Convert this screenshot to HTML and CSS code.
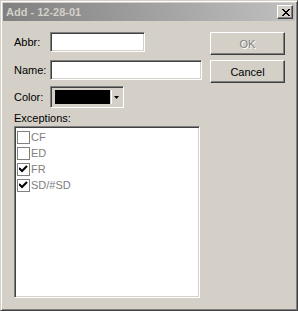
FILE: index.html
```html
<!DOCTYPE html>
<html lang="en">
<head>
    <meta charset="UTF-8">
    <title>Add - 12-28-01</title>
    <link rel="stylesheet" href="styles.css">
</head>
<body>
    <div class="window">
        <!-- Title bar -->
        <div class="titlebar">
            <span class="title">Add - 12-28-01</span>
            <button class="close-btn">
                <svg width="8" height="7" viewBox="0 0 8 7">
                    <path d="M0 0h2v1h-2zM6 0h2v1h-2zM1 1h2v1h-2zM5 1h2v1h-2zM2 2h4v1h-4zM3 3h2v1h-2zM2 4h4v1h-4zM1 5h2v1h-2zM5 5h2v1h-2zM0 6h2v1h-2zM6 6h2v1h-2z" fill="#000"/>
                </svg>
            </button>
        </div>

        <div class="content">
            <div class="form">
                <div class="row row-abbr">
                    <label class="label">Abbr:</label>
                    <div class="field field-abbr"></div>
                </div>
                <div class="row row-name">
                    <label class="label">Name:</label>
                    <div class="field field-name"></div>
                </div>
                <div class="row row-color">
                    <label class="label">Color:</label>
                    <div class="combo">
                        <div class="swatch"></div>
                        <div class="combo-arrow">
                            <svg width="5" height="3" viewBox="0 0 5 3"><path d="M0 0h5L2.5 3z" fill="#000"/></svg>
                        </div>
                    </div>
                </div>

                <div class="list-label">Exceptions:</div>
                <div class="list">
                    <div class="item"><span class="check"></span>CF</div>
                    <div class="item"><span class="check"></span>ED</div>
                    <div class="item"><span class="check checked"><svg width="9" height="8" viewBox="0 0 9 8"><path d="M0 3l2 2 1 1L8 1" stroke="#000" stroke-width="2" fill="none"/></svg></span>FR</div>
                    <div class="item"><span class="check checked"><svg width="9" height="8" viewBox="0 0 9 8"><path d="M0 3l2 2 1 1L8 1" stroke="#000" stroke-width="2" fill="none"/></svg></span>SD/#SD</div>
                </div>
            </div>

            <div class="buttons">
                <button class="btn btn-disabled">OK</button>
                <button class="btn">Cancel</button>
            </div>
        </div>
    </div>
</body>
</html>
```

FILE: styles.css
```css
body, html {
    margin: 0;
    padding: 0;
    background: #d4d0c8;
    font-family: 'Liberation Sans', Arial, sans-serif;
    font-size: 11px;
}

.window {
    box-sizing: border-box;
    width: 298px;
    height: 311px;
    padding: 2px;
    background: #d4d0c8;
    border: 1px solid;
    border-color: #d4d0c8 #404040 #404040 #d4d0c8;
    box-shadow: inset 1px 1px #fff, inset -1px -1px #808080;
}

.titlebar {
    height: 18px;
    display: flex;
    align-items: center;
    justify-content: space-between;
    padding: 0 2px 0 3px;
    background: linear-gradient(to right, #808080, #c0c0c0);
}

.title {
    color: #d4d0c8;
    font-weight: bold;
    font-size: 11px;
}

.close-btn {
    box-sizing: border-box;
    width: 16px;
    height: 14px;
    padding: 0 0 0 1px;
    display: flex;
    align-items: center;
    justify-content: center;
    background: #d4d0c8;
    border: 1px solid;
    border-color: #fff #404040 #404040 #fff;
    box-shadow: inset -1px -1px #808080;
}

.content {
    display: flex;
    gap: 8px;
    padding: 11px 0 0 11px;
}

.form {
    width: 188px;
}

.row {
    display: flex;
    align-items: center;
}

.label {
    width: 36px;
    color: #000;
}

.row-name {
    margin-top: 8px;
}

.row-color {
    margin-top: 6px;
}

.field {
    box-sizing: border-box;
    height: 20px;
    background: #fff;
    border: 1px solid;
    border-color: #808080 #fff #fff #808080;
    box-shadow: inset 1px 1px #404040, inset -1px -1px #d4d0c8;
}

.field-abbr {
    width: 95px;
}

.field-name {
    width: 152px;
}

.combo {
    box-sizing: border-box;
    width: 74px;
    height: 22px;
    display: flex;
    padding: 3px 2px 3px 4px;
    background: #d4d0c8;
    border: 1px solid;
    border-color: #808080 #fff #fff #808080;
    box-shadow: inset 1px 1px #404040, inset -1px -1px #d4d0c8;
}

.swatch {
    flex: 1;
    background: #000;
}

.combo-arrow {
    width: 9px;
    margin-left: 1px;
    border-left: 1px solid #fff;
    display: flex;
    align-items: center;
    justify-content: center;
}

.list-label {
    margin-top: 4px;
    line-height: 13px;
    height: 14px;
}

.list {
    box-sizing: border-box;
    width: 186px;
    height: 172px;
    padding: 2px 2px;
    background: #fff;
    border: 1px solid;
    border-color: #808080 #fff #fff #808080;
    box-shadow: inset 1px 1px #404040, inset -1px -1px #d4d0c8;
}

.item {
    height: 16px;
    display: flex;
    align-items: center;
    color: #808080;
}

.check {
    box-sizing: border-box;
    width: 13px;
    height: 13px;
    margin-right: 1px;
    border: 1px solid #808080;
    display: flex;
    align-items: center;
    justify-content: center;
}

.buttons {
    display: flex;
    flex-direction: column;
    gap: 5px;
}

.btn {
    box-sizing: border-box;
    width: 75px;
    height: 23px;
    padding: 0;
    font-family: 'Liberation Sans', Arial, sans-serif;
    font-size: 11px;
    color: #000;
    background: #d4d0c8;
    border: 1px solid;
    border-color: #fff #404040 #404040 #fff;
    box-shadow: inset -1px -1px #808080;
}

.btn-disabled {
    color: #808080;
    text-shadow: 1px 1px #fff;
}
```
